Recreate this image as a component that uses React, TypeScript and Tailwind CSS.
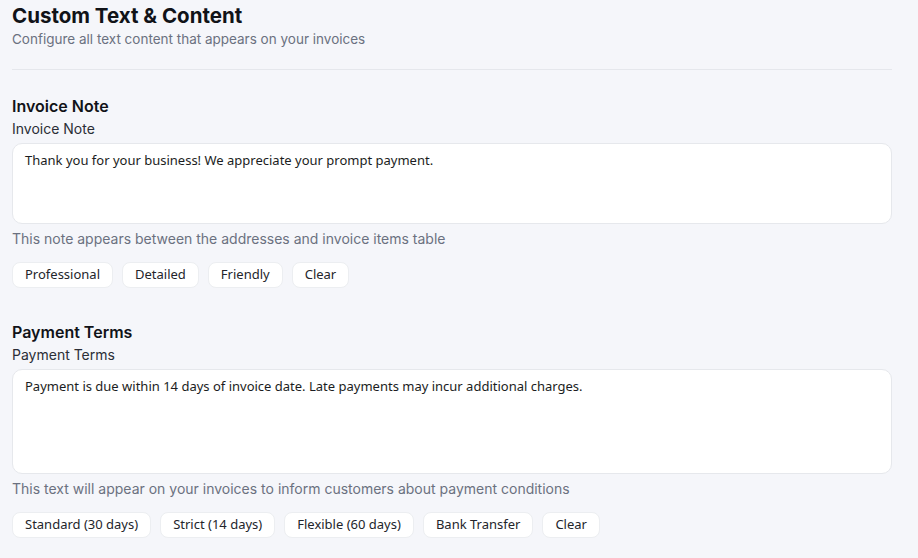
const sysFont = "font-['Segoe_UI','Noto_Sans',sans-serif]";

function Section({
  title,
  value,
  rows,
  help,
  presets,
}: {
  title: string;
  value: string;
  rows: string;
  help: string;
  presets: string[];
}) {
  return (
    <div className="flex flex-col">
      <h3 className="text-[16px] leading-5 font-semibold text-[#111318]">{title}</h3>
      <label className="mt-[3px] text-[14px] leading-5 text-[#2b2e36]">{title}</label>
      <textarea
        readOnly
        value={value}
        className={`mt-[4px] ${rows} w-full resize-none rounded-[10px] border border-[#e6e8ec] bg-white px-3 py-[6px] text-[13px] leading-5 text-[#1b1d22] outline-none ${sysFont}`}
      />
      <p className="mt-[5px] text-[14px] leading-5 text-[#6b7180]">{help}</p>
      <div className="mt-[13px] flex gap-[9px]">
        {presets.map((p) => (
          <button
            key={p}
            className={`h-[26px] rounded-lg border border-[#eceef1] bg-white px-3 text-[13px] text-[#23252b] ${sysFont}`}
          >
            {p}
          </button>
        ))}
      </div>
    </div>
  );
}

export default function App() {
  return (
    <div className="min-h-[558px] bg-[#f5f6fa] font-['Inter',sans-serif]">
      <div className="w-[880px] ml-3 pt-[3px]">
        <h1 className="text-[20.5px] leading-[26px] font-bold text-[#111318]">Custom Text &amp; Content</h1>
        <p className="text-[13.5px] leading-5 text-[#6b7180]">Configure all text content that appears on your invoices</p>
        <div className="mt-[20px] mb-[26px] h-px bg-[#e5e7ec]" />
        <Section
          title="Invoice Note"
          value="Thank you for your business! We appreciate your prompt payment."
          rows="h-[81px]"
          help="This note appears between the addresses and invoice items table"
          presets={['Professional', 'Detailed', 'Friendly', 'Clear']}
        />
        <div className="h-[34px]" />
        <Section
          title="Payment Terms"
          value="Payment is due within 14 days of invoice date. Late payments may incur additional charges."
          rows="h-[105px]"
          help="This text will appear on your invoices to inform customers about payment conditions"
          presets={['Standard (30 days)', 'Strict (14 days)', 'Flexible (60 days)', 'Bank Transfer', 'Clear']}
        />
      </div>
    </div>
  );
}
